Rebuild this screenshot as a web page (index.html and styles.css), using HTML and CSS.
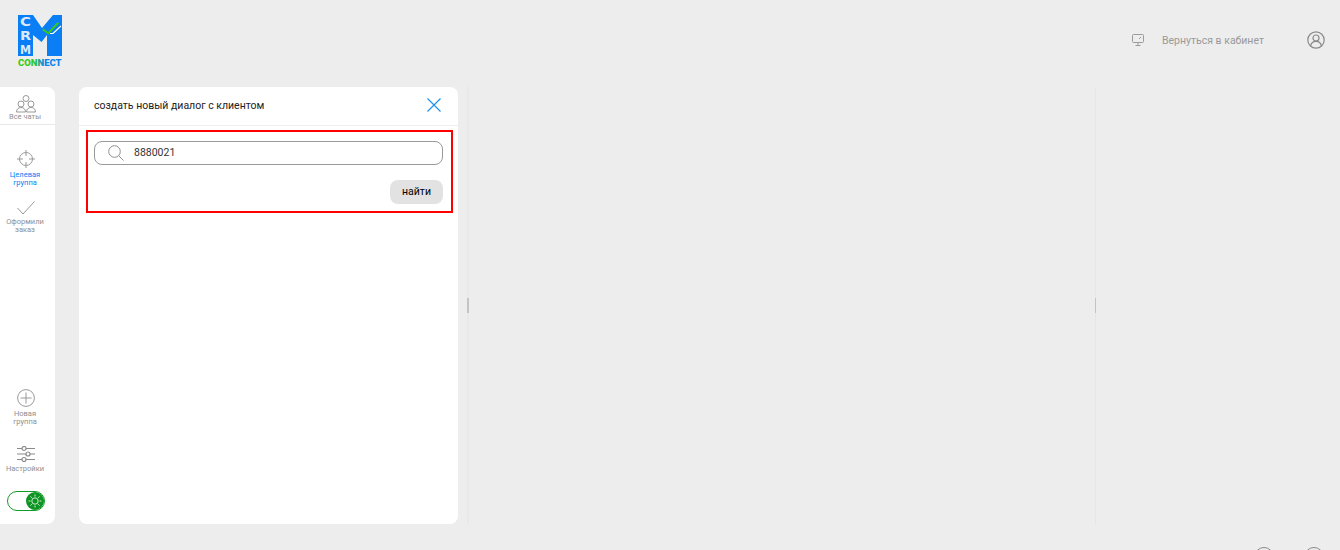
FILE: index.html
```html
<!DOCTYPE html>
<html lang="en">

<head>
    <meta charset="UTF-8">
    <meta name="viewport" content="width=device-width, initial-scale=1.0">
    <title>CRM Connect</title>
    <link rel="stylesheet" href="styles.css">
</head>

<body>

    <header class="topbar">
        <svg class="logo" width="46" height="56" viewBox="0 0 46 56">
            <defs>
                <linearGradient id="connectFill" x1="0" x2="1" y1="0" y2="0">
                    <stop offset="0.35" stop-color="#35c91e" />
                    <stop offset="0.6" stop-color="#0a84f0" />
                </linearGradient>
            </defs>
            <polygon fill="#0a7ff5" points="0,0 15,0 24,13 35,0 44,0 44,41 29,41 29,20 23.500,27 15,20 15,41 0,41" />
            <text class="logo-crm" x="2" y="11" textLength="11" lengthAdjust="spacingAndGlyphs">C</text>
            <text class="logo-crm" x="2" y="25" textLength="11" lengthAdjust="spacingAndGlyphs">R</text>
            <text class="logo-crm" x="2" y="39" textLength="11" lengthAdjust="spacingAndGlyphs">M</text>
            <path d="M24.700 14.300l5.600 4 10-10.600" fill="none" stroke="#35c91e" stroke-width="2" />
            <path d="M32 18.500h3l8-7.500" fill="none" stroke="#ffffff" stroke-width="1.200" />
            <text class="logo-connect" x="0" y="51" fill="url(#connectFill)">CONNECT</text>
        </svg>
        <div class="topbar-right">
            <svg class="cabinet-icon" width="12" height="12" viewBox="0 0 12 12" fill="none" stroke="#9a9a9a" stroke-width="1">
                <rect x="0.500" y="0.500" width="11" height="8" rx="1" />
                <path d="M6 8.500v3M3.500 11.500h5M7 5l2-2" />
            </svg>
            <a href="#" class="cabinet-link">Вернуться в кабинет</a>
            <svg class="user-icon" width="18" height="18" viewBox="0 0 18 18" fill="none" stroke="#8a8a8a" stroke-width="1.200">
                <circle cx="9" cy="9" r="8.200" />
                <circle cx="9" cy="7" r="3" />
                <path d="M3.600 15c.6-3 2.800-4.600 5.400-4.600s4.800 1.600 5.400 4.600" />
            </svg>
        </div>
    </header>

    <main class="workspace">
        <aside class="sidebar">
            <div class="side-item side-all">
                <svg width="20" height="18" viewBox="0 0 20 18" fill="none" stroke="#999999" stroke-width="1">
                    <circle cx="10" cy="3.500" r="3" />
                    <circle cx="5" cy="9" r="3" />
                    <circle cx="15" cy="9" r="3" />
                    <path d="M0.500 17c0-3 2-4.500 4.500-4.500s4.500 1.500 4.500 4.500zM10.500 17c0-3 2-4.500 4.500-4.500s4.500 1.500 4.500 4.500z" />
                </svg>
                <span>Все чаты</span>
            </div>
            <div class="side-item side-target active">
                <svg width="18" height="18" viewBox="0 0 18 18" fill="none" stroke="#999999" stroke-width="1">
                    <circle cx="9" cy="9" r="6.500" />
                    <path d="M9 0v6M9 12v6M0 9h6M12 9h6" />
                </svg>
                <span>Целевая<br>группа</span>
            </div>
            <div class="side-item side-done">
                <svg width="18" height="14" viewBox="0 0 18 14" fill="none" stroke="#999999" stroke-width="1">
                    <path d="M0.500 7l5.500 6 11.500-12.500" />
                </svg>
                <span>Оформили<br>заказ</span>
            </div>

            <div class="side-bottom">
                <div class="side-item">
                    <svg width="18" height="18" viewBox="0 0 18 18" fill="none" stroke="#999999" stroke-width="1">
                        <circle cx="9" cy="9" r="8.400" />
                        <path d="M9 3.500v11M3.500 9h11" />
                    </svg>
                    <span>Новая<br>группа</span>
                </div>
                <div class="side-item side-settings">
                    <svg width="18" height="16" viewBox="0 0 18 16" fill="none" stroke="#8a8a8a" stroke-width="1.200">
                        <path d="M0 2.500h5M9 2.500h9M0 8h9M13 8h5M0 13.500h5M9 13.500h9" />
                        <circle cx="7" cy="2.500" r="2" />
                        <circle cx="11" cy="8" r="2" />
                        <circle cx="7" cy="13.500" r="2" />
                    </svg>
                    <span>Настройки</span>
                </div>
                <div class="theme-toggle">
                    <span class="toggle-knob">
                        <svg width="14" height="14" viewBox="0 0 14 14" fill="none" stroke="#ffffff" stroke-width="0.800">
                            <circle cx="7" cy="7" r="3.200" />
                            <path d="M7 0.500v2M7 11.500v2M0.500 7h2M11.500 7h2M2.400 2.400l1.400 1.400M10.200 10.200l1.400 1.400M2.400 11.600l1.400-1.400M10.200 3.800l1.400-1.400" />
                        </svg>
                    </span>
                </div>
            </div>
        </aside>

        <section class="dialog-panel">
            <div class="dialog-head">
                <span>создать новый диалог с клиентом</span>
                <svg width="14" height="14" viewBox="0 0 14 14" fill="none" stroke="#1e90f0" stroke-width="1.200">
                    <path d="M0.500 0.500l13 13M13.500 0.500l-13 13" />
                </svg>
            </div>
            <form class="search-box">
                <div class="search-field">
                    <svg width="16" height="16" viewBox="0 0 16 16" fill="none" stroke="#8f8f8f" stroke-width="1">
                        <circle cx="6.500" cy="6.500" r="5.800" />
                        <path d="M10.800 10.800l4.700 4.700" />
                    </svg>
                    <span class="search-value">8880021</span>
                </div>
                <div class="search-actions">
                    <button type="button" class="find-button">найти</button>
                </div>
            </form>
        </section>

        <div class="column column-chat"><span class="handle"></span></div>
        <div class="column column-info"><span class="handle"></span></div>
    </main>

    <footer class="bottom-icons">
        <span class="round-icon"></span>
        <span class="round-icon"></span>
    </footer>

</body>

</html>
```

FILE: styles.css
```css
body {
    display: flex;
    flex-direction: column;
    height: 550px;
    margin: 0;
    overflow: hidden;
    background-color: #ededed;
    font-family: Roboto, "Liberation Sans", sans-serif;
}

.topbar {
    display: flex;
    justify-content: space-between;
    flex: 0 0 87px;
    box-sizing: border-box;
    padding: 15px 15px 0 18px;
}

.logo {
    display: block;
}

.logo-crm {
    font-family: "DejaVu Sans", sans-serif;
    font-size: 11.500px;
    font-weight: bold;
    fill: #dbe9fb;
}

.logo-connect {
    font-family: Roboto, sans-serif;
    font-size: 9.500px;
    font-weight: 900;
}

.topbar-right {
    display: flex;
    align-items: center;
    align-self: flex-start;
    height: 18px;
    margin-top: 16px;
}

.cabinet-link {
    margin: 0 43px 0 18px;
    color: #9a9a9a;
    font-size: 10.500px;
    text-decoration: none;
}

.workspace {
    display: flex;
    flex: 0 0 437px;
}

.sidebar {
    display: flex;
    flex-direction: column;
    box-sizing: border-box;
    width: 55px;
    padding: 8px 3px 0 0;
    background-color: white;
    border-radius: 0 8px 8px 0;
}

.side-item {
    display: flex;
    flex-direction: column;
    align-items: center;
    color: #8f8f8f;
    font-size: 7.500px;
    line-height: 8px;
    text-align: center;
}

.side-item span {
    margin: 3px 2px 0 0;
}

.side-all {
    height: 29px;
    margin-right: -3px;
    padding-right: 3px;
    border-bottom: 1px solid #e8e8e8;
}

.side-all svg {
    margin-right: 1px;
}

.side-all span {
    margin-top: 0;
}

.side-target {
    margin-top: 25px;
}

.side-done {
    margin-top: 14px;
}

.active {
    color: #0a7ff5;
}

.side-bottom {
    display: flex;
    flex-direction: column;
    align-items: center;
    margin-top: auto;
    padding-bottom: 13px;
}

.side-settings {
    margin-top: 20px;
}

.theme-toggle {
    display: flex;
    justify-content: flex-end;
    box-sizing: border-box;
    width: 38px;
    height: 20px;
    margin-top: 18px;
    border: 1px solid #109a26;
    border-radius: 10px;
    background-color: white;
}

.toggle-knob {
    display: flex;
    align-items: center;
    justify-content: center;
    width: 18px;
    height: 18px;
    border-radius: 50%;
    background-color: #0d9422;
}

.dialog-panel {
    width: 379px;
    margin-left: 24px;
    background-color: white;
    border-radius: 8px;
}

.dialog-head {
    display: flex;
    align-items: center;
    justify-content: space-between;
    box-sizing: border-box;
    height: 39px;
    padding: 0 17px 2px 15px;
    border-bottom: 1px solid #eeeeee;
    color: #222222;
    font-size: 10.500px;
}

.search-box {
    box-sizing: border-box;
    width: 367px;
    height: 83px;
    margin: 4px 0 0 7px;
    padding: 9px 8px 0 6px;
    border: 2px solid #ff0000;
}

.search-field {
    display: flex;
    align-items: center;
    box-sizing: border-box;
    height: 24px;
    padding: 0 0 1px 13px;
    border: 1px solid #999999;
    border-radius: 8px;
}

.search-value {
    margin-left: 10px;
    color: #333333;
    font-size: 10.500px;
}

.search-actions {
    display: flex;
    justify-content: flex-end;
    padding-top: 15px;
}

.find-button {
    width: 53px;
    height: 24px;
    padding: 0 0 2px;
    border: none;
    border-radius: 8px;
    background-color: #e2e2e2;
    color: #000000;
    font-family: inherit;
    font-size: 10.500px;
    font-weight: 400;
}

.column {
    display: flex;
    align-items: center;
}

.column-chat {
    width: 626px;
    margin-left: 9px;
    border-left: 2px solid #e8e8e8;
}

.column-chat .handle {
    width: 2px;
    margin-left: -2px;
}

.column-info {
    flex: 1;
    border-left: 1px solid #e6e6e6;
}

.handle {
    width: 1px;
    height: 15px;
    margin-left: -1px;
    background-color: #c4c4c4;
}

.bottom-icons {
    display: flex;
    justify-content: flex-end;
    gap: 30px;
    padding: 23px 16px 0 0;
}

.round-icon {
    box-sizing: border-box;
    width: 20px;
    height: 20px;
    border: 1px solid #8a8a8a;
    border-radius: 50%;
}
```
